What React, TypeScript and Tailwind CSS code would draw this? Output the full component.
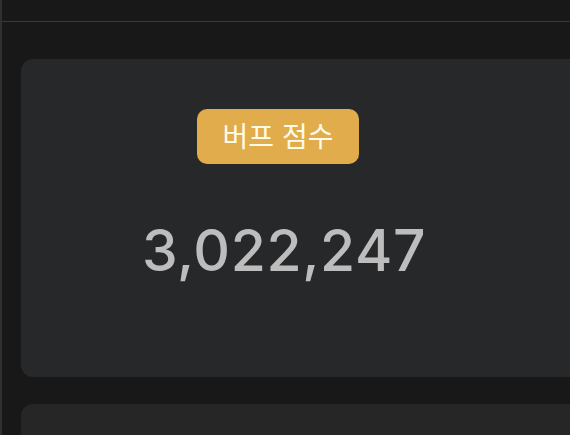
export default function App() {
  return (
    <div className="flex h-[435px] w-[570px] overflow-hidden bg-[#181818] font-['Inter','Noto_Sans_CJK_KR',sans-serif]">
      <div className="w-[2px] shrink-0 bg-[#303030]" />
      <div className="flex min-w-0 flex-1 flex-col">
        <div className="h-[22px] shrink-0 border-b border-[#3a3a3a]" />
        <div className="flex flex-col gap-[27px] pl-[19px] pt-[37px]">
          <div className="h-[318px] w-[600px] rounded-[12px] bg-[#27282a]">
            <div className="flex w-[514px] flex-col items-center pt-[50px]">
              <div className="flex h-[55px] w-[162px] items-center justify-center rounded-[10px] bg-[#e0ac4c] text-[28px] font-normal text-[#fffbe8]">
                버프 점수
              </div>
              <div className="ml-[12px] mt-[53px] text-[57px] font-medium leading-[68px] tracking-[0.6px] text-[#bdbdbd]">
                3,022,247
              </div>
            </div>
          </div>
          <div className="h-[120px] w-[600px] rounded-[12px] bg-[#262626]" />
        </div>
      </div>
    </div>
  );
}
